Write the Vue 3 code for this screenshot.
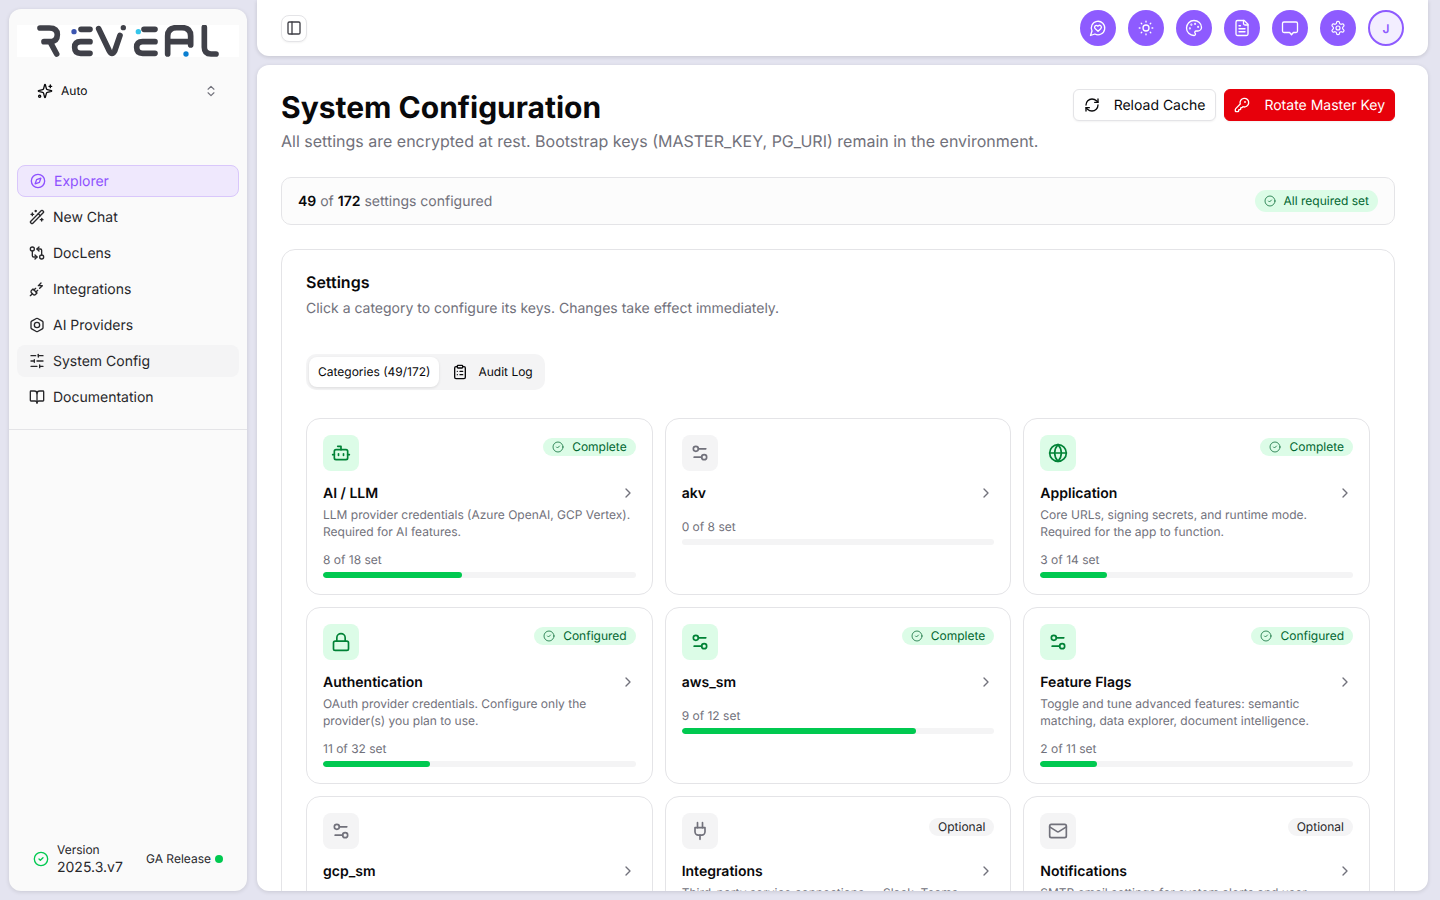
<script setup>
const icons = {
  compass: '<circle cx="12" cy="12" r="10"/><polygon points="16.24 7.76 14.12 14.12 7.76 16.24 9.88 9.88"/>',
  wand: '<path d="m21.64 3.64-1.28-1.28a1.21 1.21 0 0 0-1.72 0L2.36 18.64a1.21 1.21 0 0 0 0 1.72l1.28 1.28a1.2 1.2 0 0 0 1.72 0L21.64 5.36a1.2 1.2 0 0 0 0-1.72"/><path d="m14 7 3 3"/><path d="M5 6v4"/><path d="M19 14v4"/><path d="M10 2v2"/><path d="M7 8H3"/><path d="M21 16h-4"/><path d="M11 3H9"/>',
  compare: '<circle cx="5" cy="6" r="3"/><path d="M12 6h5a2 2 0 0 1 2 2v7"/><path d="m15 9-3-3 3-3"/><circle cx="19" cy="18" r="3"/><path d="M12 18H7a2 2 0 0 1-2-2V9"/><path d="m9 15 3 3-3 3"/>',
  plugZap: '<path d="M6.3 20.3a2.4 2.4 0 0 0 3.4 0L12 18l-6-6-2.3 2.3a2.4 2.4 0 0 0 0 3.4Z"/><path d="m2 22 3-3"/><path d="M7.5 13.5 10 11"/><path d="M10.5 16.5 13 14"/><path d="m18 3-4 4h6l-4 4"/>',
  hexagon: '<path d="M21 16V8a2 2 0 0 0-1-1.73l-7-4a2 2 0 0 0-2 0l-7 4A2 2 0 0 0 3 8v8a2 2 0 0 0 1 1.73l7 4a2 2 0 0 0 2 0l7-4A2 2 0 0 0 21 16z"/><circle cx="12" cy="12" r="4"/>',
  sliders: '<path d="M21 4h-7"/><path d="M10 4H3"/><path d="M21 12h-9"/><path d="M8 12H3"/><path d="M21 20h-5"/><path d="M12 20H3"/><path d="M14 2v4"/><path d="M8 10v4"/><path d="M16 18v4"/>',
  book: '<path d="M12 7v14"/><path d="M3 18a1 1 0 0 1-1-1V4a1 1 0 0 1 1-1h5a4 4 0 0 1 4 4 4 4 0 0 1 4-4h5a1 1 0 0 1 1 1v13a1 1 0 0 1-1 1h-6a3 3 0 0 0-3 3 3 3 0 0 0-3-3z"/>',
  sparkles: '<path d="M9.937 15.5A2 2 0 0 0 8.5 14.063l-6.135-1.582a.5.5 0 0 1 0-.962L8.5 9.936A2 2 0 0 0 9.937 8.5l1.582-6.135a.5.5 0 0 1 .963 0L14.063 8.5A2 2 0 0 0 15.5 9.937l6.135 1.581a.5.5 0 0 1 0 .964L15.5 14.063a2 2 0 0 0-1.437 1.437l-1.582 6.135a.5.5 0 0 1-.963 0z"/><path d="M20 3v4"/><path d="M22 5h-4"/><circle cx="4" cy="20" r="1.6"/>',
  updown: '<path d="m7 15 5 5 5-5"/><path d="m7 9 5-5 5 5"/>',
  panel: '<rect x="3" y="3" width="18" height="18" rx="2"/><path d="M9 3v18"/>',
  heartChat: '<path d="M7.9 20A9 9 0 1 0 4 16.1L2 22Z"/><path d="M15.8 9.2a2.5 2.5 0 0 0-3.5 0l-.3.4-.35-.3a2.42 2.42 0 1 0-3.2 3.6l3.6 3.5 3.6-3.5c1.2-1.2 1.1-2.7.2-3.7"/>',
  sun: '<circle cx="12" cy="12" r="4"/><path d="M12 3v1"/><path d="M12 20v1"/><path d="M3 12h1"/><path d="M20 12h1"/><path d="m18.364 5.636-.707.707"/><path d="m6.343 17.657-.707.707"/><path d="m5.636 5.636.707.707"/><path d="m17.657 17.657.707.707"/>',
  palette: '<path d="M12 22a1 1 0 0 1 0-20 10 9 0 0 1 10 9 5 5 0 0 1-5 5h-2.25a1.75 1.75 0 0 0-1.4 2.8l.3.4a1.75 1.75 0 0 1-1.4 2.8z"/><circle cx="13.5" cy="6.5" r=".5"/><circle cx="17.5" cy="10.5" r=".5"/><circle cx="6.5" cy="12.5" r=".5"/><circle cx="8.5" cy="7.5" r=".5"/>',
  file: '<path d="M15 2H6a2 2 0 0 0-2 2v16a2 2 0 0 0 2 2h12a2 2 0 0 0 2-2V7Z"/><path d="M14 2v4a2 2 0 0 0 2 2h4"/><path d="M10 9H8"/><path d="M16 13H8"/><path d="M16 17H8"/>',
  chat: '<path d="M4 4h16a2 2 0 0 1 2 2v10a2 2 0 0 1-2 2h-3.5L14 21l-2.5-3H4a2 2 0 0 1-2-2V6a2 2 0 0 1 2-2z"/>',
  gear: '<path d="M12.22 2h-.44a2 2 0 0 0-2 2v.18a2 2 0 0 1-1 1.73l-.43.25a2 2 0 0 1-2 0l-.15-.08a2 2 0 0 0-2.73.73l-.22.38a2 2 0 0 0 .73 2.73l.15.1a2 2 0 0 1 1 1.72v.51a2 2 0 0 1-1 1.74l-.15.09a2 2 0 0 0-.73 2.73l.22.38a2 2 0 0 0 2.73.73l.15-.08a2 2 0 0 1 2 0l.43.25a2 2 0 0 1 1 1.73V20a2 2 0 0 0 2 2h.44a2 2 0 0 0 2-2v-.18a2 2 0 0 1 1-1.73l.43-.25a2 2 0 0 1 2 0l.15.08a2 2 0 0 0 2.73-.73l.22-.39a2 2 0 0 0-.73-2.73l-.15-.08a2 2 0 0 1-1-1.74v-.5a2 2 0 0 1 1-1.74l.15-.09a2 2 0 0 0 .73-2.73l-.22-.38a2 2 0 0 0-2.73-.73l-.15.08a2 2 0 0 1-2 0l-.43-.25a2 2 0 0 1-1-1.73V4a2 2 0 0 0-2-2z"/><circle cx="12" cy="12" r="3"/>',
  refresh: '<path d="M3 12a9 9 0 0 1 9-9 9.75 9.75 0 0 1 6.74 2.74L21 8"/><path d="M21 3v5h-5"/><path d="M21 12a9 9 0 0 1-9 9 9.75 9.75 0 0 1-6.74-2.74L3 16"/><path d="M8 16H3v5"/>',
  key: '<path d="M2.586 17.414A2 2 0 0 0 2 18.828V21a1 1 0 0 0 1 1h3a1 1 0 0 0 1-1v-1a1 1 0 0 1 1-1h1a1 1 0 0 0 1-1v-1a1 1 0 0 1 1-1h.172a2 2 0 0 0 1.414-.586l.814-.814a6.5 6.5 0 1 0-4-4z"/><circle cx="16.5" cy="7.5" r=".5"/>',
  check: '<circle cx="12" cy="12" r="10"/><path d="m9 12 2 2 4-4"/>',
  clipboard: '<rect x="8" y="2" width="8" height="4" rx="1"/><path d="M16 4h2a2 2 0 0 1 2 2v14a2 2 0 0 1-2 2H6a2 2 0 0 1-2-2V6a2 2 0 0 1 2-2h2"/><path d="M12 11h4"/><path d="M12 16h4"/><path d="M8 11h.01"/><path d="M8 16h.01"/>',
  bot: '<path d="M12 8V4H8"/><rect x="4" y="8" width="16" height="12" rx="2"/><path d="M2 14h2"/><path d="M20 14h2"/><path d="M15 13v2"/><path d="M9 13v2"/>',
  globe: '<circle cx="12" cy="12" r="10"/><path d="M12 2a14.5 14.5 0 0 0 0 20 14.5 14.5 0 0 0 0-20"/><path d="M2 12h20"/>',
  lock: '<rect x="3" y="11" width="18" height="11" rx="2"/><path d="M7 11V7a5 5 0 0 1 10 0v4"/>',
  settings2: '<path d="M14 17H5"/><path d="M19 7h-9"/><circle cx="17" cy="17" r="3"/><circle cx="7" cy="7" r="3"/>',
  plug: '<path d="M12 22v-5"/><path d="M9 8V2"/><path d="M15 8V2"/><path d="M18 8v5a4 4 0 0 1-4 4h-4a4 4 0 0 1-4-4V8Z"/>',
  mail: '<rect x="2" y="4" width="20" height="16" rx="2"/><path d="m22 7-8.97 5.7a1.94 1.94 0 0 1-2.06 0L2 7"/>',
  chevron: '<path d="m9 18 6-6-6-6"/>'
}

const navItems = [
  { label: 'Explorer', icon: 'compass', state: 'active' },
  { label: 'New Chat', icon: 'wand' },
  { label: 'DocLens', icon: 'compare' },
  { label: 'Integrations', icon: 'plugZap' },
  { label: 'AI Providers', icon: 'hexagon' },
  { label: 'System Config', icon: 'sliders', state: 'current' },
  { label: 'Documentation', icon: 'book' }
]

const topActions = [
  { icon: 'heartChat' },
  { icon: 'sun' },
  { icon: 'palette' },
  { icon: 'file' },
  { icon: 'chat' },
  { icon: 'gear', size: 'small' }
]

const categories = [
  { name: 'AI / LLM', icon: 'bot', status: 'Complete', set: 8, total: 18, desc: 'LLM provider credentials (Azure OpenAI, GCP Vertex). Required for AI features.' },
  { name: 'akv', icon: 'settings2', set: 0, total: 8 },
  { name: 'Application', icon: 'globe', status: 'Complete', set: 3, total: 14, desc: 'Core URLs, signing secrets, and runtime mode. Required for the app to function.' },
  { name: 'Authentication', icon: 'lock', status: 'Configured', set: 11, total: 32, desc: 'OAuth provider credentials. Configure only the provider(s) you plan to use.' },
  { name: 'aws_sm', icon: 'settings2', status: 'Complete', set: 9, total: 12 },
  { name: 'Feature Flags', icon: 'settings2', status: 'Configured', set: 2, total: 11, desc: 'Toggle and tune advanced features: semantic matching, data explorer, document intelligence.' },
  { name: 'gcp_sm', icon: 'settings2', set: 0, total: 10 },
  { name: 'Integrations', icon: 'plug', status: 'Optional', set: 0, total: 20, desc: 'Third-party service connections — Slack, Teams, webhooks, and more.' },
  { name: 'Notifications', icon: 'mail', status: 'Optional', set: 0, total: 9, desc: 'SMTP email settings for system alerts and user notifications.' }
]

const isGreen = (c) => c.set > 0
</script>

<template>
  <div class="shell">
    <aside class="sidebar">
      <div class="logo">
        <svg viewBox="51 75 666 96" width="222" height="32" fill="none" stroke="#3f4048" stroke-width="17" stroke-linecap="round" stroke-linejoin="round">
          <path d="M120 84H148Q172 84 172 104Q172 125 148 125H132M150 125L170 162" />
          <path d="M243 88H270M270 125H242Q224 125 224 142Q224 160 242 160H270" />
          <path d="M296 86L328 153Q336 168 344 153L360 106" />
          <path d="M432 88H465M465 125H428Q410 125 410 142Q410 160 428 160H465" />
          <path d="M503 162V108Q503 83 530 83H546Q572 83 572 108V135M503 125H572" />
          <path d="M613 82V142Q613 162 633 162H648" />
          <circle cx="222" cy="95" r="8" fill="#3b55b0" stroke="none" />
          <circle cx="370" cy="83" r="8" fill="#3f4048" stroke="none" />
          <circle cx="415" cy="95" r="8" fill="#35c5ea" stroke="none" />
          <circle cx="558" cy="162" r="8" fill="#0a7ed0" stroke="none" />
        </svg>
      </div>
      <div class="mode">
        <svg class="ic" viewBox="0 0 24 24" v-html="icons.sparkles"></svg>
        <span class="mode-label">Auto</span>
        <svg class="ic mode-arrows" viewBox="0 0 24 24" v-html="icons.updown"></svg>
      </div>
      <nav class="nav">
        <a v-for="item in navItems" :key="item.label" class="nav-item" :class="item.state">
          <svg class="ic" viewBox="0 0 24 24" v-html="icons[item.icon]"></svg>
          <span>{{ item.label }}</span>
        </a>
      </nav>
      <div class="side-foot">
        <svg class="ic foot-check" viewBox="0 0 24 24" v-html="icons.check"></svg>
        <div class="version">
          <span class="version-label">Version</span>
          <span class="version-num">2025.3.v7</span>
        </div>
        <div class="release"><span class="release-text">GA Release</span><i class="dot"></i></div>
      </div>
    </aside>

    <div class="right">
      <header class="topbar">
        <button class="panel-btn">
          <svg class="ic" viewBox="0 0 24 24" v-html="icons.panel"></svg>
        </button>
        <div class="top-actions">
          <button v-for="a in topActions" :key="a.icon" class="round">
            <svg class="ic" :class="a.size" viewBox="0 0 24 24" v-html="icons[a.icon]"></svg>
          </button>
          <div class="avatar">J</div>
        </div>
      </header>

      <main class="main">
        <div class="page-head">
          <div>
            <h1>System Configuration</h1>
            <p class="sub">All settings are encrypted at rest. Bootstrap keys (MASTER_KEY, PG_URI) remain in the environment.</p>
          </div>
          <div class="head-btns">
            <button class="btn">
              <svg class="ic" viewBox="0 0 24 24" v-html="icons.refresh"></svg>
              Reload Cache
            </button>
            <button class="btn danger">
              <svg class="ic" viewBox="0 0 24 24" v-html="icons.key"></svg>
              Rotate Master Key
            </button>
          </div>
        </div>

        <div class="stats">
          <span><b>49</b> of <b>172</b> settings configured</span>
          <span class="stats-badge">
            <svg class="ic" viewBox="0 0 24 24" v-html="icons.check"></svg>
            <span class="lift">All required set</span>
          </span>
        </div>

        <section class="settings">
          <h2>Settings</h2>
          <p class="settings-sub">Click a category to configure its keys. Changes take effect immediately.</p>

          <div class="tabs">
            <div class="tab on"><span class="lift">Categories (49/172)</span></div>
            <div class="tab">
              <svg class="ic" viewBox="0 0 24 24" v-html="icons.clipboard"></svg>
              <span class="lift">Audit Log</span>
            </div>
          </div>

          <div class="grid">
            <div v-for="c in categories" :key="c.name" class="card">
              <div class="card-top">
                <div class="card-icon" :class="{ green: isGreen(c) }">
                  <svg class="ic" viewBox="0 0 24 24" v-html="icons[c.icon]"></svg>
                </div>
                <span v-if="c.status" class="badge" :class="{ plain: c.status === 'Optional' }">
                  <svg v-if="c.status !== 'Optional'" class="ic" viewBox="0 0 24 24" v-html="icons.check"></svg>
                  <span class="lift">{{ c.status }}</span>
                </span>
              </div>
              <div class="card-title">
                <span>{{ c.name }}</span>
                <svg class="ic" viewBox="0 0 24 24" v-html="icons.chevron"></svg>
              </div>
              <p v-if="c.desc" class="card-desc">{{ c.desc }}</p>
              <div class="card-count" :class="{ bare: !c.desc }">{{ c.set }} of {{ c.total }} set</div>
              <div class="track">
                <div class="fill" :style="{ width: (c.set / c.total * 100) + '%' }"></div>
              </div>
            </div>
          </div>
        </section>
      </main>
    </div>
  </div>
</template>

<style>
html, body {
  margin: 0;
  height: 100%;
  overflow: hidden;
  background: #e4e4f0;
}
</style>

<style scoped>
.shell {
  display: flex;
  height: 900px;
  box-sizing: border-box;
  padding: 0 12px 9px 9px;
  gap: 10px;
  font-family: Inter, "Liberation Sans", sans-serif;
  text-rendering: geometricPrecision;
  color: #09090b;
  overflow: hidden;
}

.ic {
  width: 16px;
  height: 16px;
  flex: none;
  fill: none;
  stroke: currentColor;
  stroke-width: 2;
  stroke-linecap: round;
  stroke-linejoin: round;
}

/* 12px labels sit a pixel high in their pills */
.lift {
  padding-bottom: 2px;
}

.sidebar {
  width: 238px;
  flex: none;
  margin-top: 9px;
  box-sizing: border-box;
  padding: 16px 8px 0;
  background: #fafafa;
  border-radius: 12px;
  box-shadow: 0 1px 4px rgba(0, 0, 0, 0.12);
  display: flex;
  flex-direction: column;
}

.logo {
  height: 32px;
  background: #fff;
}

.logo svg {
  display: block;
}

.mode {
  margin-top: 16px;
  height: 36px;
  padding: 0 20px;
  display: flex;
  align-items: center;
  gap: 8px;
  font-size: 12px;
}

.mode-label {
  flex: 1;
  padding-bottom: 2px;
}

.mode-arrows {
  width: 14px;
  height: 14px;
  color: #71717b;
  margin-right: 1px;
}

.nav {
  margin: 56px -8px 0;
  padding: 0 8px 16px;
  display: flex;
  flex-direction: column;
  gap: 4px;
  border-bottom: 1px solid #e4e4e7;
}

.nav-item {
  height: 32px;
  padding: 0 12px;
  display: flex;
  align-items: center;
  gap: 8px;
  border-radius: 8px;
  font-size: 14px;
  color: #27272a;
}

.nav-item.active {
  box-sizing: border-box;
  height: 32px;
  color: #8e51ff;
  background: #efe8fd;
  border: 1px solid #d9c7fb;
}

.nav-item.current {
  background: #f4f4f5;
}

.side-foot {
  margin-top: auto;
  height: 64px;
  padding: 0 16px;
  display: flex;
  align-items: center;
}

.foot-check {
  color: #00c950;
  margin-right: 8px;
}

.version {
  display: flex;
  flex-direction: column;
  flex: 1;
}

.version-label {
  font-size: 12px;
  line-height: 16px;
  color: #27272a;
}

.version-num {
  font-size: 14px;
  line-height: 19px;
  color: #27272a;
}

.release {
  display: flex;
  align-items: center;
  gap: 4px;
  font-size: 12px;
  color: #27272a;
}

.release-text {
  padding-bottom: 2px;
}

.dot {
  width: 8px;
  height: 8px;
  border-radius: 50%;
  background: #00c950;
}

.right {
  flex: 1;
  min-width: 0;
  display: flex;
  flex-direction: column;
  gap: 9px;
}

.topbar {
  height: 56px;
  flex: none;
  box-sizing: border-box;
  background: #fff;
  border-radius: 0 0 12px 12px;
  box-shadow: 0 1px 4px rgba(0, 0, 0, 0.14);
  padding: 0 24px;
  display: flex;
  align-items: center;
  justify-content: space-between;
}

.panel-btn {
  width: 26px;
  height: 27px;
  padding: 0;
  display: flex;
  align-items: center;
  justify-content: center;
  background: #fff;
  color: #3f3f46;
  border: 1px solid #e4e4e7;
  border-radius: 8px;
  box-shadow: 0 1px 2px rgba(0, 0, 0, 0.05);
}

.top-actions {
  display: flex;
  gap: 12px;
}

.round {
  width: 36px;
  height: 36px;
  padding: 0;
  border: 0;
  border-radius: 50%;
  background: #8e5bff;
  color: #fff;
  display: flex;
  align-items: center;
  justify-content: center;
}

.round .ic {
  width: 18px;
  height: 18px;
  stroke-width: 1.75;
}

.round .ic.small {
  width: 16px;
  height: 16px;
}

.avatar {
  width: 36px;
  height: 36px;
  box-sizing: border-box;
  border: 2px solid #8e5bff;
  border-radius: 50%;
  background: #f3eeff;
  color: #8e5bff;
  font-size: 12px;
  font-weight: 600;
  display: flex;
  align-items: center;
  justify-content: center;
}

.main {
  flex: 1;
  min-height: 0;
  background: #fff;
  border-radius: 12px;
  box-shadow: 0 1px 4px rgba(0, 0, 0, 0.12);
  padding: 24px 33px 0 24px;
  overflow: hidden;
}

.page-head {
  display: flex;
  justify-content: space-between;
  align-items: flex-start;
}

h1 {
  margin: 1px 0 0;
  font-size: 30px;
  line-height: 36px;
  font-weight: 700;
}

.sub {
  margin: 3px 0 0;
  font-size: 16px;
  line-height: 24px;
  color: #71717b;
}

.head-btns {
  display: flex;
  gap: 8px;
}

.btn {
  height: 32px;
  box-sizing: border-box;
  padding: 0 10px;
  display: flex;
  align-items: center;
  gap: 14px;
  font-family: inherit;
  font-size: 14px;
  text-rendering: inherit;
  color: #09090b;
  background: #fff;
  border: 1px solid #e4e4e7;
  border-radius: 6px;
  box-shadow: 0 1px 2px rgba(0, 0, 0, 0.05);
}

.btn.danger {
  padding: 0 9px;
  color: #fff;
  background: #e7000b;
  border-color: #e7000b;
}

.stats {
  margin-top: 24px;
  height: 48px;
  box-sizing: border-box;
  padding: 0 16px;
  display: flex;
  align-items: center;
  justify-content: space-between;
  background: #fcfcfc;
  border: 1px solid #e4e4e7;
  border-radius: 10px;
  font-size: 14px;
  color: #71717b;
}

.stats b {
  color: #09090b;
  font-weight: 600;
}

.stats-badge {
  height: 22px;
  padding: 0 9px;
  display: flex;
  align-items: center;
  gap: 8px;
  font-size: 12px;
  color: #016630;
  background: #dcfce7;
  border-radius: 11px;
}

.stats-badge .ic,
.badge .ic {
  width: 12px;
  height: 12px;
  stroke-width: 1.5;
}

.settings {
  margin-top: 24px;
  padding: 24px 24px 0;
  border: 1px solid #e4e4e7;
  border-radius: 14px;
  height: 900px;
}

h2 {
  margin: 0;
  font-size: 16px;
  line-height: 16px;
  font-weight: 600;
}

.settings-sub {
  margin: 9px 0 0;
  font-size: 14px;
  line-height: 20px;
  color: #71717b;
}

.tabs {
  margin-top: 35px;
  width: max-content;
  height: 36px;
  box-sizing: border-box;
  padding: 3px;
  display: flex;
  background: #f4f4f5;
  border-radius: 10px;
}

.tab {
  padding: 0 9px;
  display: flex;
  align-items: center;
  gap: 10px;
  font-size: 12px;
  border-radius: 8px;
  color: #09090b;
}

.tab.on {
  background: #fff;
  box-shadow: 0 1px 3px rgba(0, 0, 0, 0.1);
  margin-right: 4px;
}

.grid {
  margin-top: 28px;
  display: grid;
  grid-template-columns: repeat(3, 1fr);
  grid-template-rows: 177px 177px 177px;
  gap: 12px;
}

.card {
  box-sizing: border-box;
  padding: 16px;
  border: 1px solid #e4e4e7;
  border-radius: 14px;
  background: #fff;
  display: flex;
  flex-direction: column;
}

.card-top {
  display: flex;
  justify-content: space-between;
  align-items: flex-start;
  height: 36px;
}

.card-icon {
  width: 36px;
  height: 36px;
  border-radius: 8px;
  background: #f4f4f5;
  color: #71717b;
  display: flex;
  align-items: center;
  justify-content: center;
}

.card-icon .ic {
  width: 20px;
  height: 20px;
}

.card-icon.green {
  background: #dcfce7;
  color: #008236;
}

.badge {
  margin-top: 3px;
  height: 18px;
  padding: 0 9px;
  display: flex;
  align-items: center;
  gap: 8px;
  font-size: 12px;
  color: #016630;
  background: #dcfce7;
  border-radius: 9px;
}

.badge.plain {
  margin-top: 5px;
  color: #27272a;
  background: #f4f4f5;
}

.card-title {
  margin-top: 12px;
  height: 20px;
  display: flex;
  align-items: center;
  justify-content: space-between;
  font-size: 14px;
  font-weight: 600;
}

.card-title .ic {
  color: #71717b;
}

.card-desc {
  margin: 3px 0 0;
  font-size: 12px;
  line-height: 17px;
  color: #71717b;
}

.card-count {
  margin-top: 12px;
  font-size: 12px;
  line-height: 16px;
  color: #71717b;
}

.card-count.bare {
  margin-top: 16px;
}

.track {
  margin-top: 4px;
  height: 6px;
  border-radius: 3px;
  background: #f4f4f5;
  overflow: hidden;
}

.fill {
  height: 100%;
  border-radius: 3px;
  background: #00c950;
}
</style>
